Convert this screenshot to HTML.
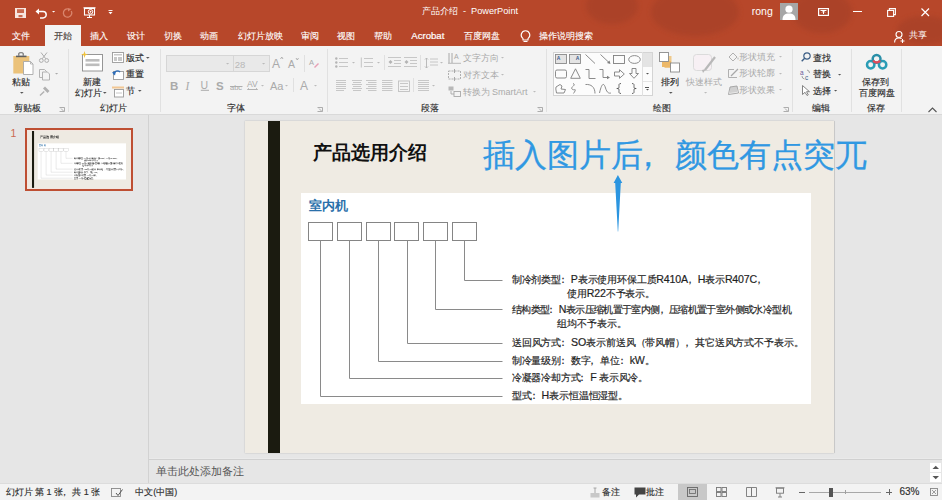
<!DOCTYPE html>
<html><head><meta charset="utf-8"><title>PowerPoint</title>
<style>
html,body{margin:0;padding:0;}
body{width:942px;height:500px;overflow:hidden;position:relative;background:#E6E6E6;font-family:"Liberation Sans",sans-serif;}
.t{position:absolute;white-space:nowrap;}
.r{position:absolute;}
.p{position:relative;left:-3px;}
.L{font-size:10.6px;}
.d{-webkit-text-stroke:0.15px currentColor;}
svg.r{overflow:visible;}
</style></head><body>
<div class="r" style="left:0px;top:0px;width:942px;height:46px;background:#B7472A;"></div>
<svg class="r" style="left:0;top:0;overflow:hidden" width="942" height="46"><defs><filter id="bl" x="-20%" y="-50%" width="140%" height="200%"><feGaussianBlur stdDeviation="2.5"/></filter></defs><g fill="#9E3E26" opacity="0.45" filter="url(#bl)"><ellipse cx="612" cy="6" rx="26" ry="18"/><ellipse cx="695" cy="12" rx="44" ry="24"/><ellipse cx="822" cy="12" rx="30" ry="21"/><ellipse cx="925" cy="30" rx="28" ry="14"/></g></svg>
<svg class="r" style="left:15px;top:7.5px;" width="11" height="10" viewBox="0 0 11 10"><rect x="0" y="0" width="11" height="10" fill="#F7E6E0"/><rect x="2" y="1.2" width="7" height="3.8" fill="#C86A50"/><rect x="3.5" y="7" width="4" height="2.2" fill="#C86A50"/></svg>
<svg class="r" style="left:35px;top:7.5px;" width="13" height="10" viewBox="0 0 13 10"><path d="M2 3.5H8a3.2 3.2 0 0 1 0 6.4H5" fill="none" stroke="#fff" stroke-width="1.5"/><path d="M0.5 3.5L4 0.5V6.5Z" fill="#fff"/></svg>
<svg class="r" style="left:51.6px;top:11.399999999999999px;" width="3.2" height="1.6" viewBox="0 0 3.2 1.6"><path d="M0 0H3.2L1.6 1.6Z" fill="#fff"/></svg>
<svg class="r" style="left:62.5px;top:7.5px;" width="10" height="10" viewBox="0 0 10 10"><path d="M8.3 3A4.2 4.2 0 1 1 5 0.8" fill="none" stroke="#D9856D" stroke-width="1.3"/><path d="M5 0V3.5L8.5 1Z" fill="#D9856D"/></svg>
<svg class="r" style="left:82.5px;top:7px;" width="13" height="11" viewBox="0 0 13 11"><path d="M0.5 0.8H12.5" stroke="#fff" stroke-width="1.2"/><rect x="1.5" y="1.5" width="10" height="6.5" fill="none" stroke="#fff" stroke-width="1.1"/><path d="M6.5 8V10.5M4 10.5H9" stroke="#fff" stroke-width="1"/><circle cx="7.5" cy="4.8" r="2.3" fill="none" stroke="#fff" stroke-width="1"/><path d="M6.8 3.6L8.8 4.8L6.8 6Z" fill="#fff"/></svg>
<svg class="r" style="left:107.5px;top:10px;" width="5" height="4.5" viewBox="0 0 5 4.5"><path d="M0.5 0.5H4.5" stroke="#fff" stroke-width="0.9"/><path d="M0.5 2H4.5L2.5 4.3Z" fill="#fff"/></svg>
<div class="t" style="left:421.82px;top:6.86px;font-size:9.2px;line-height:9.2px;color:#fff;font-weight:400;letter-spacing:0px;">产品介绍 &nbsp;-&nbsp; PowerPoint</div>
<div class="t" style="left:751.79px;top:6.09px;font-size:10.5px;line-height:10.5px;color:#fff;font-weight:400;letter-spacing:0px;line-height:10.5px">rong</div>
<div class="r" style="left:780px;top:3px;width:18px;height:17px;background:#A6A6A6;"></div>
<svg class="r" style="left:780px;top:3px;" width="18" height="17" viewBox="0 0 18 17"><circle cx="9" cy="6.2" r="3.6" fill="#fff"/><path d="M2.5 17C2.5 12 5 10.5 9 10.5S15.5 12 15.5 17Z" fill="#fff"/></svg>
<svg class="r" style="left:817.5px;top:8px;" width="11" height="8" viewBox="0 0 11 8"><rect x="0.6" y="0.6" width="9.8" height="6.8" fill="none" stroke="#fff" stroke-width="1.2"/><path d="M2.5 2.5H8.5" stroke="#fff" stroke-width="1"/><path d="M5.5 3V6M4 4.5L5.5 3L7 4.5" stroke="#fff" stroke-width="1" fill="none"/></svg>
<div class="r" style="left:852.5px;top:11px;width:9.5px;height:1.1999999999999993px;background:#fff;"></div>
<svg class="r" style="left:887px;top:7.5px;" width="9" height="9" viewBox="0 0 9 9"><rect x="0.6" y="2.4" width="6" height="6" fill="none" stroke="#fff" stroke-width="1.1"/><path d="M2.4 2.4V0.6H8.4V6.6H6.6" fill="none" stroke="#fff" stroke-width="1.1"/></svg>
<svg class="r" style="left:921px;top:7.5px;" width="8.5" height="8.5" viewBox="0 0 8.5 8.5"><path d="M0.5 0.5L8 8M8 0.5L0.5 8" stroke="#fff" stroke-width="1.2"/></svg>
<div class="r" style="left:45px;top:25px;width:35.5px;height:21px;background:#F3F3F3;"></div>
<div class="t" style="left:12.32px;top:31.87px;font-size:9px;line-height:9px;color:#fff;font-weight:400;letter-spacing:0px;-webkit-text-stroke:0.12px #fff">文件</div>
<div class="t" style="left:89.82px;top:31.87px;font-size:9px;line-height:9px;color:#fff;font-weight:400;letter-spacing:0px;-webkit-text-stroke:0.12px #fff">插入</div>
<div class="t" style="left:127.22px;top:31.87px;font-size:9px;line-height:9px;color:#fff;font-weight:400;letter-spacing:0px;-webkit-text-stroke:0.12px #fff">设计</div>
<div class="t" style="left:163.62px;top:31.87px;font-size:9px;line-height:9px;color:#fff;font-weight:400;letter-spacing:0px;-webkit-text-stroke:0.12px #fff">切换</div>
<div class="t" style="left:200.32px;top:31.87px;font-size:9px;line-height:9px;color:#fff;font-weight:400;letter-spacing:0px;-webkit-text-stroke:0.12px #fff">动画</div>
<div class="t" style="left:237.62px;top:31.87px;font-size:9px;line-height:9px;color:#fff;font-weight:400;letter-spacing:0px;-webkit-text-stroke:0.12px #fff">幻灯片放映</div>
<div class="t" style="left:300.52px;top:31.87px;font-size:9px;line-height:9px;color:#fff;font-weight:400;letter-spacing:0px;-webkit-text-stroke:0.12px #fff">审阅</div>
<div class="t" style="left:336.82px;top:31.87px;font-size:9px;line-height:9px;color:#fff;font-weight:400;letter-spacing:0px;-webkit-text-stroke:0.12px #fff">视图</div>
<div class="t" style="left:374.22px;top:31.87px;font-size:9px;line-height:9px;color:#fff;font-weight:400;letter-spacing:0px;-webkit-text-stroke:0.12px #fff">帮助</div>
<div class="t" style="left:463.52px;top:31.87px;font-size:9px;line-height:9px;color:#fff;font-weight:400;letter-spacing:0px;-webkit-text-stroke:0.12px #fff">百度网盘</div>
<div class="t" style="left:538.72px;top:31.87px;font-size:9px;line-height:9px;color:#fff;font-weight:400;letter-spacing:0px;-webkit-text-stroke:0.12px #fff">操作说明搜索</div>
<div class="t d" style="left:53.52px;top:31.87px;font-size:9px;line-height:9px;color:#4A3E3B;font-weight:400;letter-spacing:0px;">开始</div>
<div class="t" style="left:411.31px;top:30.86px;font-size:9.6px;line-height:9.6px;color:#fff;font-weight:400;letter-spacing:0px;line-height:9.6px;-webkit-text-stroke:0.2px #fff">Acrobat</div>
<svg class="r" style="left:519.5px;top:29.5px;" width="11" height="13" viewBox="0 0 11 13"><path d="M5.5 0.8A4.3 4.3 0 0 0 3 8.6V10H8V8.6A4.3 4.3 0 0 0 5.5 0.8Z" fill="none" stroke="#fff" stroke-width="1.1"/><path d="M3.5 11.5H7.5" stroke="#fff" stroke-width="1"/></svg>
<svg class="r" style="left:894px;top:31px;" width="11" height="12" viewBox="0 0 11 12"><circle cx="5" cy="3.5" r="3" fill="none" stroke="#fff" stroke-width="1.1"/><path d="M0.6 11.5C0.6 8 2.5 7 5 7C6 7 7 7.2 7.6 7.6" fill="none" stroke="#fff" stroke-width="1.1"/><path d="M8.5 8V12M6.5 10H10.5" stroke="#fff" stroke-width="1"/></svg>
<div class="t" style="left:908.83px;top:31.07px;font-size:8.6px;line-height:8.6px;color:#fff;font-weight:400;letter-spacing:0px;">共享</div>
<div class="r" style="left:0px;top:46px;width:942px;height:68px;background:#F3F3F3;"></div>
<div class="r" style="left:0px;top:114px;width:942px;height:1px;background:#D9D9D9;"></div>
<div class="r" style="left:67.5px;top:49px;width:1.0px;height:63px;background:#E1E1E1;"></div>
<div class="r" style="left:159.5px;top:49px;width:1.0px;height:63px;background:#E1E1E1;"></div>
<div class="r" style="left:326.5px;top:49px;width:1.0px;height:63px;background:#E1E1E1;"></div>
<div class="r" style="left:546px;top:49px;width:1px;height:63px;background:#E1E1E1;"></div>
<div class="r" style="left:791.5px;top:49px;width:1.0px;height:63px;background:#E1E1E1;"></div>
<div class="r" style="left:850.5px;top:49px;width:1.0px;height:63px;background:#E1E1E1;"></div>
<div class="r" style="left:901px;top:49px;width:1px;height:63px;background:#E1E1E1;"></div>
<div class="t d" style="left:14.22px;top:103.96px;font-size:9px;line-height:9px;color:#2E2E2E;font-weight:400;letter-spacing:0px;">剪贴板</div>
<div class="t d" style="left:99.82px;top:103.96px;font-size:9px;line-height:9px;color:#2E2E2E;font-weight:400;letter-spacing:0px;">幻灯片</div>
<div class="t d" style="left:227.32px;top:103.96px;font-size:9px;line-height:9px;color:#2E2E2E;font-weight:400;letter-spacing:0px;">字体</div>
<div class="t d" style="left:420.82px;top:103.96px;font-size:9px;line-height:9px;color:#2E2E2E;font-weight:400;letter-spacing:0px;">段落</div>
<div class="t d" style="left:652.82px;top:103.96px;font-size:9px;line-height:9px;color:#2E2E2E;font-weight:400;letter-spacing:0px;">绘图</div>
<div class="t d" style="left:811.62px;top:103.96px;font-size:9px;line-height:9px;color:#2E2E2E;font-weight:400;letter-spacing:0px;">编辑</div>
<div class="t d" style="left:866.62px;top:103.96px;font-size:9px;line-height:9px;color:#2E2E2E;font-weight:400;letter-spacing:0px;">保存</div>
<svg class="r" style="left:58.5px;top:106.5px;" width="6" height="5" viewBox="0 0 6 5"><path d="M0.5 0.5H5.5V4.5H0.5" fill="none" stroke="#9A9A9A" stroke-width="0.8"/><path d="M2 1.5L4.5 4" stroke="#9A9A9A" stroke-width="0.8"/></svg>
<svg class="r" style="left:317px;top:106.5px;" width="6" height="5" viewBox="0 0 6 5"><path d="M0.5 0.5H5.5V4.5H0.5" fill="none" stroke="#9A9A9A" stroke-width="0.8"/><path d="M2 1.5L4.5 4" stroke="#9A9A9A" stroke-width="0.8"/></svg>
<svg class="r" style="left:537px;top:106.5px;" width="6" height="5" viewBox="0 0 6 5"><path d="M0.5 0.5H5.5V4.5H0.5" fill="none" stroke="#9A9A9A" stroke-width="0.8"/><path d="M2 1.5L4.5 4" stroke="#9A9A9A" stroke-width="0.8"/></svg>
<svg class="r" style="left:782.5px;top:106.5px;" width="6" height="5" viewBox="0 0 6 5"><path d="M0.5 0.5H5.5V4.5H0.5" fill="none" stroke="#9A9A9A" stroke-width="0.8"/><path d="M2 1.5L4.5 4" stroke="#9A9A9A" stroke-width="0.8"/></svg>
<svg class="r" style="left:927.5px;top:107px;" width="9" height="5.5" viewBox="0 0 9 5.5"><path d="M0.5 5L4.5 1L8.5 5" fill="none" stroke="#555" stroke-width="1.1"/></svg>
<svg class="r" style="left:12.5px;top:51.5px;" width="21" height="23" viewBox="0 0 21 23"><rect x="0.3" y="4" width="16" height="17.5" fill="#EBC27A"/><rect x="3" y="3.6" width="10.5" height="1.6" fill="#5E5E5E"/><path d="M5.8 3.8V1.8A1 1 0 0 1 6.8 0.8H9.2A1 1 0 0 1 10.2 1.8V3.8" fill="none" stroke="#6A6A6A" stroke-width="1.1"/><path d="M10.5 9.5H17.5L20 12V22.5H10.5Z" fill="#fff" stroke="#A8A8A8" stroke-width="0.9"/><path d="M17.5 9.5V12H20" fill="none" stroke="#A8A8A8" stroke-width="0.8"/></svg>
<div class="t d" style="left:11.82px;top:78.16px;font-size:9px;line-height:9px;color:#2A2A2A;font-weight:400;letter-spacing:0px;">粘贴</div>
<svg class="r" style="left:20.2px;top:92.1px;" width="3.6" height="1.8" viewBox="0 0 3.6 1.8"><path d="M0 0H3.6L1.8 1.8Z" fill="#555"/></svg>
<svg class="r" style="left:38.5px;top:52px;" width="10" height="11" viewBox="0 0 10 11"><circle cx="2.3" cy="8.5" r="1.9" fill="none" stroke="#ADADAD" stroke-width="1"/><circle cx="7.7" cy="8.5" r="1.9" fill="none" stroke="#ADADAD" stroke-width="1"/><path d="M3.2 6.8L8 0.5M6.8 6.8L2 0.5" stroke="#ADADAD" stroke-width="1"/></svg>
<svg class="r" style="left:38.5px;top:68.5px;" width="11" height="11.5" viewBox="0 0 11 11.5"><path d="M0.5 0.5H5.5L7.5 2.5V8.5H0.5Z" fill="#F3F3F3" stroke="#ABABAB" stroke-width="0.9"/><path d="M3.5 3H8.5L10.5 5V11H3.5Z" fill="#F3F3F3" stroke="#ABABAB" stroke-width="0.9"/></svg>
<svg class="r" style="left:55.4px;top:73.2px;" width="3.2" height="1.6" viewBox="0 0 3.2 1.6"><path d="M0 0H3.2L1.6 1.6Z" fill="#AAA"/></svg>
<svg class="r" style="left:38.5px;top:86px;" width="11" height="10" viewBox="0 0 11 10"><path d="M6 0.5L10.5 5L8.5 7L4 2.5Z" fill="#B0B0B0"/><path d="M5.2 5.5L1 9.5" stroke="#B0B0B0" stroke-width="1.4"/></svg>
<svg class="r" style="left:81px;top:51px;" width="22" height="21" viewBox="0 0 22 21"><rect x="1.5" y="3.5" width="20" height="16.5" fill="#fff" stroke="#8C8C8C" stroke-width="0.9"/><rect x="4.5" y="8" width="14" height="2.6" fill="#BDBDBD"/><rect x="4.5" y="12.5" width="14" height="2.6" fill="#BDBDBD"/><path d="M3.5 0L4.3 2.8L7 3.5L4.3 4.2L3.5 7L2.7 4.2L0 3.5L2.7 2.8Z" fill="#F0C23B"/></svg>
<div class="t d" style="left:82.82px;top:77.86px;font-size:9px;line-height:9px;color:#2A2A2A;font-weight:400;letter-spacing:0px;">新建</div>
<div class="t d" style="left:74.52px;top:89.36px;font-size:9px;line-height:9px;color:#2A2A2A;font-weight:400;letter-spacing:0px;">幻灯片</div>
<svg class="r" style="left:103.0px;top:92.1px;" width="3.6" height="1.8" viewBox="0 0 3.6 1.8"><path d="M0 0H3.6L1.8 1.8Z" fill="#555"/></svg>
<svg class="r" style="left:111.5px;top:52px;" width="12" height="11" viewBox="0 0 12 11"><rect x="0.5" y="0.5" width="11" height="10" fill="#fff" stroke="#9A9A9A" stroke-width="0.9"/><rect x="2" y="2" width="8" height="1.5" fill="#C8C8C8"/><rect x="2" y="5" width="3" height="4" fill="#C8C8C8"/><rect x="6" y="5" width="4" height="4" fill="#C8C8C8"/></svg>
<div class="t d" style="left:125.52px;top:53.97px;font-size:9px;line-height:9px;color:#2A2A2A;font-weight:400;letter-spacing:0px;">版式</div>
<svg class="r" style="left:146.2px;top:56.9px;" width="3.6" height="1.8" viewBox="0 0 3.6 1.8"><path d="M0 0H3.6L1.8 1.8Z" fill="#555"/></svg>
<svg class="r" style="left:111.5px;top:68.5px;" width="12" height="11" viewBox="0 0 12 11"><rect x="1.5" y="2.5" width="10" height="8" fill="#fff" stroke="#9A9A9A" stroke-width="0.9"/><path d="M2 5.5A3.5 3.5 0 0 1 8 3" fill="none" stroke="#2F6EBA" stroke-width="1.4"/><path d="M0 3.5L3 6.5L4 2Z" fill="#2F6EBA"/></svg>
<div class="t d" style="left:125.52px;top:70.06px;font-size:9px;line-height:9px;color:#2A2A2A;font-weight:400;letter-spacing:0px;">重置</div>
<svg class="r" style="left:111.5px;top:85.5px;" width="12" height="11.5" viewBox="0 0 12 11.5"><rect x="0" y="0.5" width="12" height="2" fill="#F2C794"/><rect x="2.5" y="3.5" width="9" height="7.5" fill="#fff" stroke="#9A9A9A" stroke-width="0.9"/><path d="M4 7H10" stroke="#C8C8C8" stroke-width="1"/></svg>
<div class="t d" style="left:125.52px;top:87.36px;font-size:9px;line-height:9px;color:#2A2A2A;font-weight:400;letter-spacing:0px;">节</div>
<svg class="r" style="left:137.5px;top:90.3px;" width="3.6" height="1.8" viewBox="0 0 3.6 1.8"><path d="M0 0H3.6L1.8 1.8Z" fill="#555"/></svg>
<div class="r" style="left:165.5px;top:55px;width:104.0px;height:17px;background:#E9E9E9;box-sizing:border-box;border:1px solid #D6D6D6"></div>
<div class="r" style="left:232.5px;top:56px;width:1.0px;height:15px;background:#D6D6D6;"></div>
<svg class="r" style="left:226.20000000000002px;top:62.7px;" width="3.2" height="1.6" viewBox="0 0 3.2 1.6"><path d="M0 0H3.2L1.6 1.6Z" fill="#BBB"/></svg>
<svg class="r" style="left:262.09999999999997px;top:62.7px;" width="3.2" height="1.6" viewBox="0 0 3.2 1.6"><path d="M0 0H3.2L1.6 1.6Z" fill="#BBB"/></svg>
<div class="t" style="left:234.81px;top:59.61px;font-size:9.5px;line-height:9.5px;color:#B8B8B8;font-weight:400;letter-spacing:0px;line-height:9.5px">28</div>
<svg class="r" style="left:271.5px;top:56px;" width="11" height="12" viewBox="0 0 11 12"><text x="0" y="11.5" font-family="Liberation Sans" font-size="12" fill="#AAA">A</text><path d="M8.5 3L9.8 1L11 3" fill="none" stroke="#AAA" stroke-width="0.9"/></svg>
<svg class="r" style="left:287.5px;top:57px;" width="11" height="11" viewBox="0 0 11 11"><text x="0" y="10.5" font-family="Liberation Sans" font-size="10.5" fill="#AAA">A</text><path d="M8 1L9.3 3L10.5 1" fill="none" stroke="#AAA" stroke-width="0.9"/></svg>
<div class="r" style="left:303.5px;top:55px;width:1.0px;height:17px;background:#E0E0E0;"></div>
<svg class="r" style="left:309px;top:58px;" width="10" height="10" viewBox="0 0 10 10"><text x="0" y="7" font-family="Liberation Sans" font-size="7.5" fill="#AAA">A</text><path d="M5 9L9 5L10 6L6 10Z" fill="#E7A0B5"/></svg>
<svg class="r" style="left:169.5px;top:79px;" width="8" height="11" viewBox="0 0 8 11"><text x="0" y="10.5" font-family="Liberation Sans" font-weight="700" font-size="11.5" fill="#AAA">B</text></svg>
<svg class="r" style="left:185px;top:79px;" width="8" height="11" viewBox="0 0 8 11"><text x="0.5" y="10.5" font-family="Liberation Serif" font-style="italic" font-size="11.5" fill="#AAA">I</text></svg>
<svg class="r" style="left:200px;top:79px;" width="10" height="12" viewBox="0 0 10 12"><text x="0.5" y="9.5" font-family="Liberation Sans" font-size="10.5" fill="#AAA">U</text><path d="M0.8 11.3H9" stroke="#AAA" stroke-width="1"/></svg>
<svg class="r" style="left:216px;top:79px;" width="10" height="11" viewBox="0 0 10 11"><text x="0" y="10.5" font-family="Liberation Sans" font-weight="700" font-size="11.5" fill="#AAA">S</text></svg>
<svg class="r" style="left:229.5px;top:80.5px;" width="13" height="10" viewBox="0 0 13 10"><text x="0" y="8.5" font-family="Liberation Sans" font-size="7.5" fill="#AAA">abc</text><path d="M0 5.5H12.5" stroke="#AAA" stroke-width="0.9"/></svg>
<svg class="r" style="left:246.5px;top:79px;" width="11" height="12" viewBox="0 0 11 12"><text x="0" y="8" font-family="Liberation Sans" font-size="8.5" fill="#AAA">AV</text><path d="M0.5 10.5H10.5M0.5 10.5L2 9.3M10.5 10.5L9 9.3" stroke="#AAA" stroke-width="0.9"/></svg>
<svg class="r" style="left:261.2px;top:84.75px;" width="3.0" height="1.5" viewBox="0 0 3.0 1.5"><path d="M0 0H3.0L1.5 1.5Z" fill="#BBB"/></svg>
<svg class="r" style="left:269.5px;top:79.5px;" width="14" height="11" viewBox="0 0 14 11"><text x="0" y="10" font-family="Liberation Sans" font-size="11" fill="#AAA">Aa</text></svg>
<svg class="r" style="left:285.0px;top:84.75px;" width="3.0" height="1.5" viewBox="0 0 3.0 1.5"><path d="M0 0H3.0L1.5 1.5Z" fill="#BBB"/></svg>
<div class="r" style="left:293px;top:78px;width:1px;height:14px;background:#E0E0E0;"></div>
<svg class="r" style="left:299.5px;top:78.5px;" width="9" height="12" viewBox="0 0 9 12"><text x="0" y="11" font-family="Liberation Sans" font-size="12" fill="#AAA">A</text></svg>
<svg class="r" style="left:314.2px;top:84.75px;" width="3.0" height="1.5" viewBox="0 0 3.0 1.5"><path d="M0 0H3.0L1.5 1.5Z" fill="#BBB"/></svg>
<svg class="r" style="left:334.5px;top:57px;" width="13" height="11" viewBox="0 0 13 11"><path d="M4 1.5H13" stroke="#C2C2C2" stroke-width="0.9"/><path d="M4 5.5H13" stroke="#C2C2C2" stroke-width="0.9"/><path d="M4 9.5H13" stroke="#C2C2C2" stroke-width="0.9"/><circle cx="1.3" cy="1.5" r="1.2" fill="#B4B4B4"/><circle cx="1.3" cy="5.5" r="1.2" fill="#B4B4B4"/><circle cx="1.3" cy="9.5" r="1.2" fill="#B4B4B4"/></svg>
<svg class="r" style="left:351.5px;top:61.75px;" width="3.0" height="1.5" viewBox="0 0 3.0 1.5"><path d="M0 0H3.0L1.5 1.5Z" fill="#BBB"/></svg>
<svg class="r" style="left:360px;top:57px;" width="13" height="11" viewBox="0 0 13 11"><path d="M4 1.5H13" stroke="#C2C2C2" stroke-width="0.9"/><path d="M4 5.5H13" stroke="#C2C2C2" stroke-width="0.9"/><path d="M4 9.5H13" stroke="#C2C2C2" stroke-width="0.9"/><path d="M1.3 0.5V10.5" stroke="#BDBDBD" stroke-width="0.9"/></svg>
<svg class="r" style="left:376.5px;top:61.75px;" width="3.0" height="1.5" viewBox="0 0 3.0 1.5"><path d="M0 0H3.0L1.5 1.5Z" fill="#BBB"/></svg>
<div class="r" style="left:384px;top:55px;width:1px;height:15px;background:#E0E0E0;"></div>
<svg class="r" style="left:388px;top:57px;" width="13" height="11" viewBox="0 0 13 11"><path d="M0 0.5H13" stroke="#C2C2C2" stroke-width="0.9"/><path d="M6 3.5H13" stroke="#C2C2C2" stroke-width="0.9"/><path d="M6 6.5H13" stroke="#C2C2C2" stroke-width="0.9"/><path d="M0 9.5H13" stroke="#C2C2C2" stroke-width="0.9"/><path d="M2.5 3L0.5 5L2.5 7L4.5 5Z" fill="#B4B4B4"/></svg>
<svg class="r" style="left:404px;top:57px;" width="13" height="11" viewBox="0 0 13 11"><path d="M0 0.5H13" stroke="#C2C2C2" stroke-width="0.9"/><path d="M6 3.5H13" stroke="#C2C2C2" stroke-width="0.9"/><path d="M6 6.5H13" stroke="#C2C2C2" stroke-width="0.9"/><path d="M0 9.5H13" stroke="#C2C2C2" stroke-width="0.9"/><path d="M2.5 3L0.5 5L2.5 7L4.5 5Z" fill="#B4B4B4"/></svg>
<div class="r" style="left:420px;top:55px;width:1px;height:15px;background:#E0E0E0;"></div>
<svg class="r" style="left:424px;top:56.5px;" width="14" height="12" viewBox="0 0 14 12"><path d="M6 2H14" stroke="#C2C2C2" stroke-width="0.9"/><path d="M6 5H14" stroke="#C2C2C2" stroke-width="0.9"/><path d="M6 8H14" stroke="#C2C2C2" stroke-width="0.9"/><path d="M2.5 1V11M1 2.5L2.5 1L4 2.5M1 9.5L2.5 11L4 9.5" fill="none" stroke="#B4B4B4" stroke-width="0.9"/></svg>
<svg class="r" style="left:439.5px;top:61.75px;" width="3.0" height="1.5" viewBox="0 0 3.0 1.5"><path d="M0 0H3.0L1.5 1.5Z" fill="#BBB"/></svg>
<svg class="r" style="left:447.5px;top:51.5px;" width="13" height="12" viewBox="0 0 13 12"><path d="M1 1V11M4 1V11" stroke="#A8A8A8" stroke-width="1"/><text x="6" y="7" font-family="Liberation Sans" font-size="7" fill="#A8A8A8">A</text><path d="M0 11.3H13" stroke="#A8A8A8" stroke-width="0.8"/></svg>
<div class="t" style="left:462.62px;top:54.16px;font-size:9px;line-height:9px;color:#AAAAAA;font-weight:400;letter-spacing:0px;">文字方向</div>
<svg class="r" style="left:500.5px;top:56.55px;" width="3.0" height="1.5" viewBox="0 0 3.0 1.5"><path d="M0 0H3.0L1.5 1.5Z" fill="#BBB"/></svg>
<svg class="r" style="left:447.5px;top:68.5px;" width="13" height="12" viewBox="0 0 13 12"><rect x="0.5" y="2" width="12" height="8" fill="none" stroke="#A8A8A8" stroke-width="0.9" stroke-dasharray="2 1"/><path d="M6.5 0V4M6.5 8V12" stroke="#A8A8A8" stroke-width="1"/></svg>
<div class="t" style="left:462.62px;top:70.86px;font-size:9px;line-height:9px;color:#AAAAAA;font-weight:400;letter-spacing:0px;">对齐文本</div>
<svg class="r" style="left:500.5px;top:74.05px;" width="3.0" height="1.5" viewBox="0 0 3.0 1.5"><path d="M0 0H3.0L1.5 1.5Z" fill="#BBB"/></svg>
<svg class="r" style="left:447.5px;top:86px;" width="13" height="11" viewBox="0 0 13 11"><rect x="0.5" y="0.5" width="5" height="4" fill="#B8B8B8"/><rect x="6" y="5.5" width="6.5" height="5" fill="none" stroke="#A8A8A8" stroke-width="0.9"/><path d="M3 5V8H6" fill="none" stroke="#A8A8A8" stroke-width="0.9"/></svg>
<div class="t" style="left:462.62px;top:87.96px;font-size:9px;line-height:9px;color:#AAAAAA;font-weight:400;letter-spacing:0px;">转换为 SmartArt</div>
<svg class="r" style="left:532.5px;top:91.15px;" width="3.0" height="1.5" viewBox="0 0 3.0 1.5"><path d="M0 0H3.0L1.5 1.5Z" fill="#BBB"/></svg>
<svg class="r" style="left:336px;top:80px;" width="12" height="11" viewBox="0 0 12 11"><path d="M0 0.5H10" stroke="#C2C2C2" stroke-width="0.9"/><path d="M0 2.5H10" stroke="#C2C2C2" stroke-width="0.9"/><path d="M0 4.5H10" stroke="#C2C2C2" stroke-width="0.9"/><path d="M0 6.5H10" stroke="#C2C2C2" stroke-width="0.9"/><path d="M0 8.5H10" stroke="#C2C2C2" stroke-width="0.9"/><path d="M0 10.5H8" stroke="#C2C2C2" stroke-width="0.9"/></svg>
<svg class="r" style="left:351.5px;top:80px;" width="12" height="11" viewBox="0 0 12 11"><path d="M0 0.5H10" stroke="#C2C2C2" stroke-width="0.9"/><path d="M1 2.5H9" stroke="#C2C2C2" stroke-width="0.9"/><path d="M0 4.5H10" stroke="#C2C2C2" stroke-width="0.9"/><path d="M1 6.5H9" stroke="#C2C2C2" stroke-width="0.9"/><path d="M0 8.5H10" stroke="#C2C2C2" stroke-width="0.9"/><path d="M1 10.5H9" stroke="#C2C2C2" stroke-width="0.9"/></svg>
<svg class="r" style="left:366px;top:80px;" width="12" height="11" viewBox="0 0 12 11"><path d="M0 0.5H10.5" stroke="#C2C2C2" stroke-width="0.9"/><path d="M2 2.5H10.5" stroke="#C2C2C2" stroke-width="0.9"/><path d="M0 4.5H10.5" stroke="#C2C2C2" stroke-width="0.9"/><path d="M2 6.5H10.5" stroke="#C2C2C2" stroke-width="0.9"/><path d="M0 8.5H10.5" stroke="#C2C2C2" stroke-width="0.9"/><path d="M2 10.5H10.5" stroke="#C2C2C2" stroke-width="0.9"/></svg>
<svg class="r" style="left:382px;top:80px;" width="12" height="11" viewBox="0 0 12 11"><path d="M0 0.5H10.5" stroke="#C2C2C2" stroke-width="0.9"/><path d="M0 2.5H10.5" stroke="#C2C2C2" stroke-width="0.9"/><path d="M0 4.5H10.5" stroke="#C2C2C2" stroke-width="0.9"/><path d="M0 6.5H10.5" stroke="#C2C2C2" stroke-width="0.9"/><path d="M0 8.5H10.5" stroke="#C2C2C2" stroke-width="0.9"/><path d="M0 10.5H10.5" stroke="#C2C2C2" stroke-width="0.9"/></svg>
<svg class="r" style="left:397.5px;top:79.5px;" width="12" height="12" viewBox="0 0 12 12"><path d="M2 3.5H10" stroke="#C2C2C2" stroke-width="0.9"/><path d="M2 6.5H10" stroke="#C2C2C2" stroke-width="0.9"/><path d="M2 9.5H10" stroke="#C2C2C2" stroke-width="0.9"/><rect x="0.5" y="1" width="11" height="10.5" fill="none" stroke="#C0C0C0" stroke-width="0.9"/></svg>
<div class="r" style="left:413px;top:78px;width:1px;height:14px;background:#E0E0E0;"></div>
<svg class="r" style="left:417.5px;top:80px;" width="12" height="11" viewBox="0 0 12 11"><path d="M0 0.5H11" stroke="#C2C2C2" stroke-width="0.9"/><path d="M0 2.5H11" stroke="#C2C2C2" stroke-width="0.9"/><path d="M0 4.5H11" stroke="#C2C2C2" stroke-width="0.9"/><path d="M0 6.5H11" stroke="#C2C2C2" stroke-width="0.9"/><path d="M0 8.5H11" stroke="#C2C2C2" stroke-width="0.9"/><path d="M0 10.5H11" stroke="#C2C2C2" stroke-width="0.9"/></svg>
<svg class="r" style="left:432.0px;top:84.75px;" width="3.0" height="1.5" viewBox="0 0 3.0 1.5"><path d="M0 0H3.0L1.5 1.5Z" fill="#BBB"/></svg>
<div class="r" style="left:552.5px;top:51.5px;width:100.0px;height:44.5px;background:#FCFCFC;box-sizing:border-box;border:1px solid #D4D4D4"></div>
<div class="r" style="left:642.5px;top:52.5px;width:9.0px;height:13.5px;background:#E4E4E4;"></div>
<div class="r" style="left:642px;top:52px;width:1px;height:44px;background:#E0E0E0;"></div>
<div class="r" style="left:643px;top:66px;width:9px;height:1px;background:#E4E4E4;"></div>
<div class="r" style="left:643px;top:81px;width:9px;height:1px;background:#E4E4E4;"></div>
<svg class="r" style="left:645.7px;top:73.05px;" width="3.0" height="1.5" viewBox="0 0 3.0 1.5"><path d="M0 0H3.0L1.5 1.5Z" fill="#555"/></svg>
<div class="r" style="left:645.2px;top:86.5px;width:4.199999999999932px;height:0.7999999999999972px;background:#555;"></div>
<svg class="r" style="left:645.7px;top:88.75px;" width="3.0" height="1.5" viewBox="0 0 3.0 1.5"><path d="M0 0H3.0L1.5 1.5Z" fill="#555"/></svg>
<svg class="r" style="left:554.5px;top:54px;" width="12" height="10" viewBox="0 0 12 10"><rect x="0.5" y="0.5" width="11" height="9" fill="#E4E4E4" stroke="#8A8A8A" stroke-width="0.9"/><text x="1.8" y="5.8" font-family="Liberation Sans" font-weight="700" font-size="5" fill="#3A5A8A">A</text></svg>
<svg class="r" style="left:568.5px;top:54px;" width="12" height="10" viewBox="0 0 12 10"><rect x="0.5" y="0.5" width="11" height="9" fill="#E4E4E4" stroke="#8A8A8A" stroke-width="0.9"/><text x="6.8" y="5.8" font-family="Liberation Sans" font-weight="700" font-size="5" fill="#3A5A8A">A</text></svg>
<svg class="r" style="left:585px;top:54px;" width="11" height="10" viewBox="0 0 11 10"><path d="M0.5 0.5L10 9.5" stroke="#7F7F7F" stroke-width="0.9"/></svg>
<svg class="r" style="left:599.5px;top:54px;" width="11" height="10" viewBox="0 0 11 10"><path d="M0.5 0.5L9 8.5" stroke="#7F7F7F" stroke-width="0.9"/><path d="M10.5 10L7 9L9.5 6.5Z" fill="#7F7F7F"/></svg>
<svg class="r" style="left:613px;top:54.5px;" width="12" height="9" viewBox="0 0 12 9"><rect x="0.5" y="0.5" width="11" height="8" fill="none" stroke="#7F7F7F" stroke-width="0.9"/></svg>
<svg class="r" style="left:627.5px;top:54.5px;" width="13" height="9" viewBox="0 0 13 9"><ellipse cx="6.5" cy="4.5" rx="5.8" ry="3.9" fill="none" stroke="#7F7F7F" stroke-width="0.9"/></svg>
<svg class="r" style="left:554.5px;top:68.5px;" width="12" height="10" viewBox="0 0 12 10"><rect x="0.5" y="1" width="11" height="8" rx="1.5" fill="none" stroke="#7F7F7F" stroke-width="0.9"/></svg>
<svg class="r" style="left:569.5px;top:68px;" width="11" height="11" viewBox="0 0 11 11"><path d="M5.5 0.8L10.3 10.3H0.7Z" fill="none" stroke="#7F7F7F" stroke-width="0.9"/></svg>
<svg class="r" style="left:584.5px;top:68.5px;" width="11" height="10" viewBox="0 0 11 10"><path d="M0.5 0.5H4V9.5H10.5" fill="none" stroke="#7F7F7F" stroke-width="0.9"/></svg>
<svg class="r" style="left:599px;top:68.5px;" width="11" height="11" viewBox="0 0 11 11"><path d="M0.5 0.5H4V8.5H8.5" fill="none" stroke="#7F7F7F" stroke-width="0.9"/><path d="M11 8.5L8 6.8V10.2Z" fill="#7F7F7F"/></svg>
<svg class="r" style="left:613.5px;top:68.5px;" width="11" height="10" viewBox="0 0 11 10"><path d="M0.5 3H5.5V0.7L10.3 5L5.5 9.3V7H0.5Z" fill="none" stroke="#7F7F7F" stroke-width="0.9"/></svg>
<svg class="r" style="left:628.5px;top:68px;" width="10" height="11" viewBox="0 0 10 11"><path d="M3 0.5H7V5.5H9.5L5 10.3L0.5 5.5H3Z" fill="none" stroke="#7F7F7F" stroke-width="0.9"/></svg>
<svg class="r" style="left:554.5px;top:82.5px;" width="12" height="11" viewBox="0 0 12 11"><path d="M1 4L5 1.5L7 3L6 6L10.5 6.5L9 10H1.5L0.8 6Z" fill="none" stroke="#7F7F7F" stroke-width="0.9"/></svg>
<svg class="r" style="left:570px;top:82.5px;" width="8" height="11" viewBox="0 0 8 11"><path d="M3 0.5C7 2 0 4 2 6C4 8 6 5 5 8C4 10.5 3 10 4 10.5" fill="none" stroke="#7F7F7F" stroke-width="0.9"/></svg>
<svg class="r" style="left:584.5px;top:82.5px;" width="11" height="11" viewBox="0 0 11 11"><path d="M0.5 1.5C6 1 10 4 10 10.5" fill="none" stroke="#7F7F7F" stroke-width="0.9"/></svg>
<svg class="r" style="left:598.5px;top:82.5px;" width="13" height="11" viewBox="0 0 13 11"><path d="M0.5 10C3 -1 5 0 6.5 5C8 10 10 10.5 12 10" fill="none" stroke="#7F7F7F" stroke-width="0.9"/></svg>
<svg class="r" style="left:616px;top:82.5px;" width="6" height="11" viewBox="0 0 6 11"><path d="M5 0.5C2.5 0.5 3 2 3 3.5S3 5.5 0.8 5.5C3 5.5 3 6 3 7.5S2.5 10.5 5 10.5" fill="none" stroke="#555" stroke-width="0.9"/></svg>
<svg class="r" style="left:631px;top:82.5px;" width="6" height="11" viewBox="0 0 6 11"><path d="M1 0.5C3.5 0.5 3 2 3 3.5S3 5.5 5.2 5.5C3 5.5 3 6 3 7.5S3.5 10.5 1 10.5" fill="none" stroke="#555" stroke-width="0.9"/></svg>
<svg class="r" style="left:658.5px;top:52px;" width="21.5" height="20" viewBox="0 0 21.5 20"><rect x="5.5" y="4" width="7" height="12" fill="#EFC98A"/><rect x="3" y="9" width="9" height="6" fill="#EDB868"/><rect x="0.5" y="0.5" width="9" height="9" fill="#fff" stroke="#8A8A8A" stroke-width="0.9"/><rect x="11.5" y="11" width="9" height="9" fill="#fff" stroke="#8A8A8A" stroke-width="0.9"/></svg>
<div class="t d" style="left:661.22px;top:77.56px;font-size:9px;line-height:9px;color:#2A2A2A;font-weight:400;letter-spacing:0px;">排列</div>
<svg class="r" style="left:669.2px;top:92.1px;" width="3.6" height="1.8" viewBox="0 0 3.6 1.8"><path d="M0 0H3.6L1.8 1.8Z" fill="#555"/></svg>
<svg class="r" style="left:692.5px;top:53.5px;" width="23" height="20" viewBox="0 0 23 20"><rect x="0.5" y="0.5" width="18" height="16" rx="3" fill="#F7F0F4" stroke="#D8D8D8" stroke-width="0.9"/><path d="M22 3L12 16" stroke="#B8B8B8" stroke-width="2.2"/><path d="M13 15L10 19L9 16Z" fill="#B8B8B8"/></svg>
<div class="t" style="left:685.82px;top:77.56px;font-size:9px;line-height:9px;color:#ABABAB;font-weight:400;letter-spacing:0px;">快速样式</div>
<svg class="r" style="left:704.4px;top:92.2px;" width="3.2" height="1.6" viewBox="0 0 3.2 1.6"><path d="M0 0H3.2L1.6 1.6Z" fill="#BBB"/></svg>
<svg class="r" style="left:727.5px;top:51.5px;" width="11" height="10" viewBox="0 0 11 10"><path d="M1 5L5 1L9 5L5 9Z" fill="none" stroke="#A8A8A8" stroke-width="0.9"/><path d="M9.5 6.5C9.5 8 10.5 8 10.5 6.5L10 5Z" fill="#A8A8A8"/></svg>
<div class="t" style="left:738.52px;top:52.77px;font-size:9px;line-height:9px;color:#ABABAB;font-weight:400;letter-spacing:0px;">形状填充</div>
<svg class="r" style="left:779.2px;top:55.95px;" width="3.0" height="1.5" viewBox="0 0 3.0 1.5"><path d="M0 0H3.0L1.5 1.5Z" fill="#BBB"/></svg>
<svg class="r" style="left:727.5px;top:68px;" width="11" height="10" viewBox="0 0 11 10"><path d="M0.5 9.5V1.5H6" fill="none" stroke="#A8A8A8" stroke-width="0.9"/><path d="M3 8L10 1" stroke="#A8A8A8" stroke-width="1.3"/><path d="M0.5 9.5H9" stroke="#A8A8A8" stroke-width="0.9"/></svg>
<div class="t" style="left:738.52px;top:69.36px;font-size:9px;line-height:9px;color:#ABABAB;font-weight:400;letter-spacing:0px;">形状轮廓</div>
<svg class="r" style="left:779.2px;top:72.55px;" width="3.0" height="1.5" viewBox="0 0 3.0 1.5"><path d="M0 0H3.0L1.5 1.5Z" fill="#BBB"/></svg>
<svg class="r" style="left:727.5px;top:84.5px;" width="11" height="10" viewBox="0 0 11 10"><path d="M2 2L9 1V7L2 8Z" fill="#D0D0D0"/><path d="M0.5 9.5L2 2L9 1L10.5 8Z" fill="none" stroke="#A0A0A0" stroke-width="0.9"/></svg>
<div class="t" style="left:738.52px;top:85.86px;font-size:9px;line-height:9px;color:#ABABAB;font-weight:400;letter-spacing:0px;">形状效果</div>
<svg class="r" style="left:779.2px;top:89.05px;" width="3.0" height="1.5" viewBox="0 0 3.0 1.5"><path d="M0 0H3.0L1.5 1.5Z" fill="#BBB"/></svg>
<svg class="r" style="left:800.5px;top:52px;" width="10" height="10" viewBox="0 0 10 10"><circle cx="6" cy="4" r="3.2" fill="none" stroke="#3D5F86" stroke-width="1.2"/><path d="M3.7 6.3L0.7 9.3" stroke="#3D5F86" stroke-width="1.4"/></svg>
<div class="t d" style="left:813.32px;top:53.57px;font-size:9px;line-height:9px;color:#2A2A2A;font-weight:400;letter-spacing:0px;">查找</div>
<svg class="r" style="left:800px;top:68.5px;" width="11" height="11" viewBox="0 0 11 11"><text x="0" y="6" font-family="Liberation Sans" font-size="6.5" fill="#6A5A9A">a</text><text x="5" y="11" font-family="Liberation Sans" font-size="6.5" fill="#3D5F86">c</text><path d="M7 1A3 3 0 0 1 9.5 4M2 7A3 3 0 0 0 4.5 10" fill="none" stroke="#8A8A8A" stroke-width="0.8"/></svg>
<div class="t d" style="left:813.32px;top:70.36px;font-size:9px;line-height:9px;color:#2A2A2A;font-weight:400;letter-spacing:0px;">替换</div>
<svg class="r" style="left:838.4px;top:73.5px;" width="3.2" height="1.6" viewBox="0 0 3.2 1.6"><path d="M0 0H3.2L1.6 1.6Z" fill="#555"/></svg>
<svg class="r" style="left:801.5px;top:84.5px;" width="8" height="11" viewBox="0 0 8 11"><path d="M0.5 0.5V9.5L3 7.3L5 10.5L6.3 9.8L4.5 6.7H7.5Z" fill="#fff" stroke="#777" stroke-width="0.9"/></svg>
<div class="t d" style="left:813.32px;top:86.86px;font-size:9px;line-height:9px;color:#2A2A2A;font-weight:400;letter-spacing:0px;">选择</div>
<svg class="r" style="left:834.4px;top:90.0px;" width="3.2" height="1.6" viewBox="0 0 3.2 1.6"><path d="M0 0H3.2L1.6 1.6Z" fill="#555"/></svg>
<svg class="r" style="left:864px;top:52px;" width="24" height="20" viewBox="0 0 24 20"><circle cx="6.7" cy="12.8" r="3.7" fill="none" stroke="#2A9CB5" stroke-width="2.5"/><circle cx="18.6" cy="12.8" r="3.7" fill="none" stroke="#2A9CB5" stroke-width="2.5"/><circle cx="12.6" cy="6.8" r="3.9" fill="none" stroke="#2A8FA8" stroke-width="2.5"/><path d="M9.2 8.5A3.9 3.9 0 0 0 16 8.5" fill="none" stroke="#E34C5A" stroke-width="2.5"/></svg>
<div class="t d" style="left:862.32px;top:78.06px;font-size:9px;line-height:9px;color:#2A2A2A;font-weight:400;letter-spacing:0px;">保存到</div>
<div class="t d" style="left:858.82px;top:89.27px;font-size:9px;line-height:9px;color:#2A2A2A;font-weight:400;letter-spacing:0px;">百度网盘</div>
<div class="r" style="left:0px;top:115px;width:942px;height:368px;background:#E6E6E6;"></div>
<div class="r" style="left:148px;top:115px;width:1px;height:368px;background:#D2D2D2;"></div>
<div class="r" style="left:149px;top:458px;width:793px;height:1px;background:#EAEAEA;"></div>
<div class="r" style="left:149px;top:459px;width:793px;height:1px;background:#D0D0D0;"></div>
<div class="t" style="left:156.38px;top:466.04px;font-size:10.8px;line-height:10.8px;color:#555;font-weight:400;letter-spacing:0px;">单击此处添加备注</div>
<div class="r" style="left:929.5px;top:463px;width:11.5px;height:9px;background:#FFFFFF;"></div>
<div class="r" style="left:929.5px;top:473px;width:11.5px;height:9px;background:#FFFFFF;"></div>
<svg class="r" style="left:929.5px;top:463px;" width="11.5" height="9" viewBox="0 0 11.5 9"><path d="M2.5 6L5.75 2.8L9 6Z" fill="#555"/></svg>
<svg class="r" style="left:929.5px;top:473px;" width="11.5" height="9" viewBox="0 0 11.5 9"><path d="M2.5 3L5.75 6.2L9 3Z" fill="#555"/></svg>
<div class="r" style="left:245px;top:121px;width:589px;height:331.5px;background:#EFEBE3;box-shadow:0 0 1.5px rgba(0,0,0,0.22),1px 0 0 #D4D4D4"><div class="r" style="left:23.30000000000001px;top:0px;width:11.699999999999989px;height:331.5px;background:#1B1B10;"></div><div class="t" style="left:67.53px;top:22.57px;font-size:18.7px;line-height:18.7px;color:#111;font-weight:700;letter-spacing:0px;">产品选用介绍</div><div class="t" style="left:237.76px;top:18.57px;font-size:31.9px;line-height:31.9px;color:#3098E2;font-weight:400;letter-spacing:0px;-webkit-text-stroke:0.3px #3098E2">插入图片后<span style="position:relative;left:-11px">，</span>颜色有点突兀</div><div class="r" style="left:56px;top:71.5px;width:510.20000000000005px;height:211.3px;background:#FFFFFF;"></div><div class="t" style="left:63.54px;top:78.41px;font-size:13px;line-height:13px;color:#2A70AA;font-weight:700;letter-spacing:0px;">室内机</div><div class="r" style="left:63px;top:100.5px;width:25px;height:19.0px;background:transparent;box-sizing:border-box;border:1px solid #858585"></div><div class="r" style="left:91.60000000000002px;top:100.5px;width:25.0px;height:19.0px;background:transparent;box-sizing:border-box;border:1px solid #858585"></div><div class="r" style="left:120.5px;top:100.5px;width:25.0px;height:19.0px;background:transparent;box-sizing:border-box;border:1px solid #858585"></div><div class="r" style="left:149.39999999999998px;top:100.5px;width:25.0px;height:19.0px;background:transparent;box-sizing:border-box;border:1px solid #858585"></div><div class="r" style="left:178px;top:100.5px;width:25px;height:19.0px;background:transparent;box-sizing:border-box;border:1px solid #858585"></div><div class="r" style="left:207px;top:100.5px;width:25px;height:19.0px;background:transparent;box-sizing:border-box;border:1px solid #858585"></div><svg class="r" style="left:0;top:0" width="589" height="332"><path d="M75.5 119.5V275.5H257.5" fill="none" stroke="#8A8A8A" stroke-width="1"/><path d="M104.5 119.5V257.5H257.5" fill="none" stroke="#8A8A8A" stroke-width="1"/><path d="M133.5 119.5V240.5H257.5" fill="none" stroke="#8A8A8A" stroke-width="1"/><path d="M162.5 119.5V222.5H257.5" fill="none" stroke="#8A8A8A" stroke-width="1"/><path d="M190.5 119.5V188.5H257.5" fill="none" stroke="#8A8A8A" stroke-width="1"/><path d="M219.5 119.5V159.5H257.5" fill="none" stroke="#8A8A8A" stroke-width="1"/></svg><div class="t" style="left:266.81px;top:154.28px;font-size:9.75px;line-height:9.75px;color:#1E1E1E;font-weight:400;letter-spacing:-0.17px;-webkit-text-stroke:0.18px #1E1E1E">制冷剂类型<span class=p>：</span><span class=L>P</span>表示使用环保工质<span class=L>R410A</span><span class=p>，</span><span class=L>H</span>表示<span class=L>R407C</span><span class=p>，</span></div><div class="t" style="left:322.01px;top:168.28px;font-size:9.75px;line-height:9.75px;color:#1E1E1E;font-weight:400;letter-spacing:-0.15px;-webkit-text-stroke:0.18px #1E1E1E">使用<span class=L>R22</span>不予表示。</div><div class="t" style="left:266.81px;top:184.28px;font-size:9.75px;line-height:9.75px;color:#1E1E1E;font-weight:400;letter-spacing:-0.62px;-webkit-text-stroke:0.18px #1E1E1E">结构类型<span class=p>：</span><span class=L>N</span>表示压缩机置于室内侧<span class=p>，</span>压缩机置于室外侧或水冷型机</div><div class="t" style="left:312.20px;top:198.28px;font-size:9.75px;line-height:9.75px;color:#1E1E1E;font-weight:400;letter-spacing:0px;-webkit-text-stroke:0.18px #1E1E1E">组均不予表示。</div><div class="t" style="left:266.81px;top:217.18px;font-size:9.75px;line-height:9.75px;color:#1E1E1E;font-weight:400;letter-spacing:-0.12px;-webkit-text-stroke:0.18px #1E1E1E">送回风方式<span class=p>：</span><span class=L>SO</span>表示前送风（带风帽）<span class=p>，</span>其它送风方式不予表示。</div><div class="t" style="left:266.81px;top:235.08px;font-size:9.75px;line-height:9.75px;color:#1E1E1E;font-weight:400;letter-spacing:-0.18px;-webkit-text-stroke:0.18px #1E1E1E">制冷量级别<span class=p>：</span>数字<span class=p>，</span>单位<span class=p>：</span><span class=L>kW</span>。</div><div class="t" style="left:266.81px;top:252.38px;font-size:9.75px;line-height:9.75px;color:#1E1E1E;font-weight:400;letter-spacing:-0.2px;-webkit-text-stroke:0.18px #1E1E1E">冷凝器冷却方式<span class=p>：</span><span class=L>F</span> 表示风冷。</div><div class="t" style="left:266.81px;top:269.98px;font-size:9.75px;line-height:9.75px;color:#1E1E1E;font-weight:400;letter-spacing:-0.12px;-webkit-text-stroke:0.18px #1E1E1E">型式<span class=p>：</span><span class=L>H</span>表示恒温恒湿型。</div><svg class="r" style="left:367px;top:52px" width="12" height="60" viewBox="0 0 12 60"><path d="M5.9 2L10.3 10H8.8L6.2 58.5H5.8L3.2 10H1.6Z" fill="#2B95E0"/></svg></div>
<div class="t" style="left:10.59px;top:127.79px;font-size:10.5px;line-height:10.5px;color:#CB6A50;font-weight:400;letter-spacing:0px;line-height:10.5px;font-weight:300">1</div>
<div class="r" style="left:25px;top:128.2px;width:108px;height:62.80000000000001px;background:#F4E6E0;box-sizing:border-box;border:2px solid #BE4F33"></div>
<div class="r" style="left:28px;top:131.2px;width:589px;height:331.5px;background:#EEEAE2;overflow:hidden;transform-origin:0 0;transform:scale(0.17317,0.17134)"><div class="r" style="left:23.30000000000001px;top:0px;width:11.699999999999989px;height:331.5px;background:#1B1B10;"></div><div class="t" style="left:67.53px;top:22.57px;font-size:18.7px;line-height:18.7px;color:#111;font-weight:700;letter-spacing:0px;">产品选用介绍</div><div class="r" style="left:56px;top:71.5px;width:510.20000000000005px;height:211.3px;background:#FFFFFF;"></div><div class="t" style="left:63.54px;top:78.41px;font-size:13px;line-height:13px;color:#2A70AA;font-weight:700;letter-spacing:0px;">室内机</div><div class="r" style="left:63px;top:100.5px;width:25px;height:19.0px;background:transparent;box-sizing:border-box;border:1px solid #858585"></div><div class="r" style="left:91.60000000000002px;top:100.5px;width:25.0px;height:19.0px;background:transparent;box-sizing:border-box;border:1px solid #858585"></div><div class="r" style="left:120.5px;top:100.5px;width:25.0px;height:19.0px;background:transparent;box-sizing:border-box;border:1px solid #858585"></div><div class="r" style="left:149.39999999999998px;top:100.5px;width:25.0px;height:19.0px;background:transparent;box-sizing:border-box;border:1px solid #858585"></div><div class="r" style="left:178px;top:100.5px;width:25px;height:19.0px;background:transparent;box-sizing:border-box;border:1px solid #858585"></div><div class="r" style="left:207px;top:100.5px;width:25px;height:19.0px;background:transparent;box-sizing:border-box;border:1px solid #858585"></div><svg class="r" style="left:0;top:0" width="589" height="332"><path d="M75.5 119.5V275.5H257.5" fill="none" stroke="#8A8A8A" stroke-width="1"/><path d="M104.5 119.5V257.5H257.5" fill="none" stroke="#8A8A8A" stroke-width="1"/><path d="M133.5 119.5V240.5H257.5" fill="none" stroke="#8A8A8A" stroke-width="1"/><path d="M162.5 119.5V222.5H257.5" fill="none" stroke="#8A8A8A" stroke-width="1"/><path d="M190.5 119.5V188.5H257.5" fill="none" stroke="#8A8A8A" stroke-width="1"/><path d="M219.5 119.5V159.5H257.5" fill="none" stroke="#8A8A8A" stroke-width="1"/></svg><div class="t" style="left:266.81px;top:154.28px;font-size:9.75px;line-height:9.75px;color:#1E1E1E;font-weight:400;letter-spacing:-0.17px;-webkit-text-stroke:0.18px #1E1E1E">制冷剂类型<span class=p>：</span><span class=L>P</span>表示使用环保工质<span class=L>R410A</span><span class=p>，</span><span class=L>H</span>表示<span class=L>R407C</span><span class=p>，</span></div><div class="t" style="left:322.01px;top:168.28px;font-size:9.75px;line-height:9.75px;color:#1E1E1E;font-weight:400;letter-spacing:-0.15px;-webkit-text-stroke:0.18px #1E1E1E">使用<span class=L>R22</span>不予表示。</div><div class="t" style="left:266.81px;top:184.28px;font-size:9.75px;line-height:9.75px;color:#1E1E1E;font-weight:400;letter-spacing:-0.62px;-webkit-text-stroke:0.18px #1E1E1E">结构类型<span class=p>：</span><span class=L>N</span>表示压缩机置于室内侧<span class=p>，</span>压缩机置于室外侧或水冷型机</div><div class="t" style="left:312.20px;top:198.28px;font-size:9.75px;line-height:9.75px;color:#1E1E1E;font-weight:400;letter-spacing:0px;-webkit-text-stroke:0.18px #1E1E1E">组均不予表示。</div><div class="t" style="left:266.81px;top:217.18px;font-size:9.75px;line-height:9.75px;color:#1E1E1E;font-weight:400;letter-spacing:-0.12px;-webkit-text-stroke:0.18px #1E1E1E">送回风方式<span class=p>：</span><span class=L>SO</span>表示前送风（带风帽）<span class=p>，</span>其它送风方式不予表示。</div><div class="t" style="left:266.81px;top:235.08px;font-size:9.75px;line-height:9.75px;color:#1E1E1E;font-weight:400;letter-spacing:-0.18px;-webkit-text-stroke:0.18px #1E1E1E">制冷量级别<span class=p>：</span>数字<span class=p>，</span>单位<span class=p>：</span><span class=L>kW</span>。</div><div class="t" style="left:266.81px;top:252.38px;font-size:9.75px;line-height:9.75px;color:#1E1E1E;font-weight:400;letter-spacing:-0.2px;-webkit-text-stroke:0.18px #1E1E1E">冷凝器冷却方式<span class=p>：</span><span class=L>F</span> 表示风冷。</div><div class="t" style="left:266.81px;top:269.98px;font-size:9.75px;line-height:9.75px;color:#1E1E1E;font-weight:400;letter-spacing:-0.12px;-webkit-text-stroke:0.18px #1E1E1E">型式<span class=p>：</span><span class=L>H</span>表示恒温恒湿型。</div></div>
<div class="r" style="left:0px;top:483px;width:942px;height:17px;background:#F3F3F3;"></div>
<div class="r" style="left:0px;top:483px;width:942px;height:1px;background:#DCDCDC;"></div>
<div class="t d" style="left:5.62px;top:487.97px;font-size:9px;line-height:9px;color:#2E2E2E;font-weight:400;letter-spacing:0px;">幻灯片 第 1 张<span class=p>，</span>共 1 张</div>
<svg class="r" style="left:111px;top:487.5px;" width="12" height="10" viewBox="0 0 12 10"><rect x="0.5" y="0.5" width="9" height="8" fill="none" stroke="#888" stroke-width="0.9"/><path d="M5 5L7 7.5L11.5 1.5" fill="none" stroke="#555" stroke-width="1"/></svg>
<div class="t d" style="left:135.22px;top:487.97px;font-size:9px;line-height:9px;color:#2E2E2E;font-weight:400;letter-spacing:0px;">中文(中国)</div>
<svg class="r" style="left:590px;top:487px;" width="10" height="11" viewBox="0 0 10 11"><path d="M5 1V6M3.5 1H6.5" stroke="#A0A0A0" stroke-width="0.9"/><rect x="0.5" y="6" width="9" height="4.5" fill="#C8C8C8"/></svg>
<div class="t d" style="left:601.82px;top:487.97px;font-size:9px;line-height:9px;color:#2A2A2A;font-weight:400;letter-spacing:0px;">备注</div>
<svg class="r" style="left:634px;top:487px;" width="12" height="11" viewBox="0 0 12 11"><path d="M0.5 0.5H11.5V7.5H5L2 10.5V7.5H0.5Z" fill="#444"/></svg>
<div class="t d" style="left:646.42px;top:487.97px;font-size:9px;line-height:9px;color:#2A2A2A;font-weight:400;letter-spacing:0px;">批注</div>
<div class="r" style="left:677.5px;top:483.5px;width:29.5px;height:16.5px;background:#C8C8C8;"></div>
<svg class="r" style="left:687px;top:487px;" width="11" height="10" viewBox="0 0 11 10"><rect x="0.5" y="0.5" width="10" height="9" fill="none" stroke="#666" stroke-width="0.9"/><rect x="2.5" y="2.5" width="6" height="4" fill="none" stroke="#666" stroke-width="0.8"/></svg>
<svg class="r" style="left:716px;top:487px;" width="11" height="10" viewBox="0 0 11 10"><rect x="0.5" y="0.5" width="4.5" height="4" fill="none" stroke="#777" stroke-width="0.9"/><rect x="6" y="0.5" width="4.5" height="4" fill="none" stroke="#777" stroke-width="0.9"/><rect x="0.5" y="5.5" width="4.5" height="4" fill="none" stroke="#777" stroke-width="0.9"/><rect x="6" y="5.5" width="4.5" height="4" fill="none" stroke="#777" stroke-width="0.9"/></svg>
<svg class="r" style="left:746px;top:487px;" width="11" height="10" viewBox="0 0 11 10"><path d="M0.5 0.5H5.5V9.5H0.5ZM5.5 0.5H10.5V9.5H5.5Z" fill="none" stroke="#777" stroke-width="0.9"/></svg>
<svg class="r" style="left:775px;top:487px;" width="10" height="11" viewBox="0 0 10 11"><path d="M0.5 0.8H9.5" stroke="#777" stroke-width="0.9"/><rect x="1.5" y="1.2" width="7" height="5" fill="none" stroke="#777" stroke-width="0.9"/><path d="M5 6.5V10M3 10H7" stroke="#777" stroke-width="0.9"/></svg>
<div class="r" style="left:799px;top:491.5px;width:6px;height:1.0px;background:#666;"></div>
<div class="r" style="left:809px;top:491.5px;width:72px;height:1.0px;background:#A8A8A8;"></div>
<div class="r" style="left:845px;top:489.5px;width:1px;height:4.5px;background:#A0A0A0;"></div>
<div class="r" style="left:829px;top:488px;width:4px;height:8.5px;background:#555;"></div>
<div class="r" style="left:886px;top:491.5px;width:6px;height:1.0px;background:#666;"></div>
<div class="r" style="left:888.5px;top:489px;width:1.0px;height:6px;background:#666;"></div>
<div class="t d" style="left:899.40px;top:487.45px;font-size:10px;line-height:10px;color:#2E2E2E;font-weight:400;letter-spacing:0px;line-height:10px">63%</div>
<svg class="r" style="left:929.5px;top:487.5px;" width="8" height="8" viewBox="0 0 8 8"><rect x="0.5" y="0.5" width="7" height="7" fill="none" stroke="#888" stroke-width="0.9"/><path d="M2 2L6 6M6 2L2 6" stroke="#888" stroke-width="0.8"/></svg>
</body></html>
